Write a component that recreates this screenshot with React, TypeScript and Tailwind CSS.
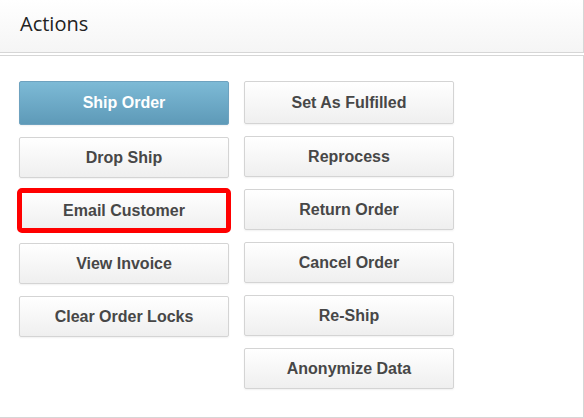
const leftActions = ['Drop Ship', 'Email Customer', 'View Invoice', 'Clear Order Locks'];
const rightActions = ['Set As Fulfilled', 'Reprocess', 'Return Order', 'Cancel Order', 'Re-Ship', 'Anonymize Data'];

const baseBtn =
  "w-[210px] flex items-center justify-center rounded-[2px] border text-[16px] font-bold font-['Liberation_Sans',Arial,sans-serif] shadow-[0_1px_2px_rgba(0,0,0,0.06)]";
const greyBtn = `${baseBtn} h-[41px] border-[#d4d4d4] bg-gradient-to-b from-white to-[#efefef] text-[#474747]`;

const App = () => {
  return (
    <div className="w-[584px] h-[418px] bg-white flex flex-col">
      {/* Header */}
      <div className="h-[53px] shrink-0 border-b border-r border-[#d6d6d6] bg-gradient-to-b from-white to-[#f5f5f5] pl-[20px] pt-[10px]">
        <h3 className="text-[20px] leading-[28px] text-[#222] font-['Open_Sans',sans-serif]">Actions</h3>
      </div>

      {/* Body */}
      <div className="mt-[2px] flex-1 border-t border-r border-b border-[#d6d6d6] bg-white pl-[19px] pt-[25px]">
        <div className="flex gap-[15px]">
          <div className="flex flex-col gap-[12px]">
            <button className={`${baseBtn} h-[44px] border-[#6ea2bf] bg-gradient-to-b from-[#7dbad6] to-[#5e9ab8] text-white`}>
              Ship Order
            </button>
            {leftActions.map((label) => (
              <button
                key={label}
                className={
                  label === 'Email Customer'
                    ? `${greyBtn} rounded-[3px] outline-[5px] outline-solid outline-[#ff0000] -outline-offset-3`
                    : greyBtn
                }
              >
                {label}
              </button>
            ))}
          </div>
          <div className="flex flex-col gap-[12px]">
            <button className={`${greyBtn} !h-[43px]`}>Set As Fulfilled</button>
            {rightActions.slice(1).map((label) => (
              <button key={label} className={greyBtn}>
                {label}
              </button>
            ))}
          </div>
        </div>
      </div>
    </div>
  );
};

export default App;
